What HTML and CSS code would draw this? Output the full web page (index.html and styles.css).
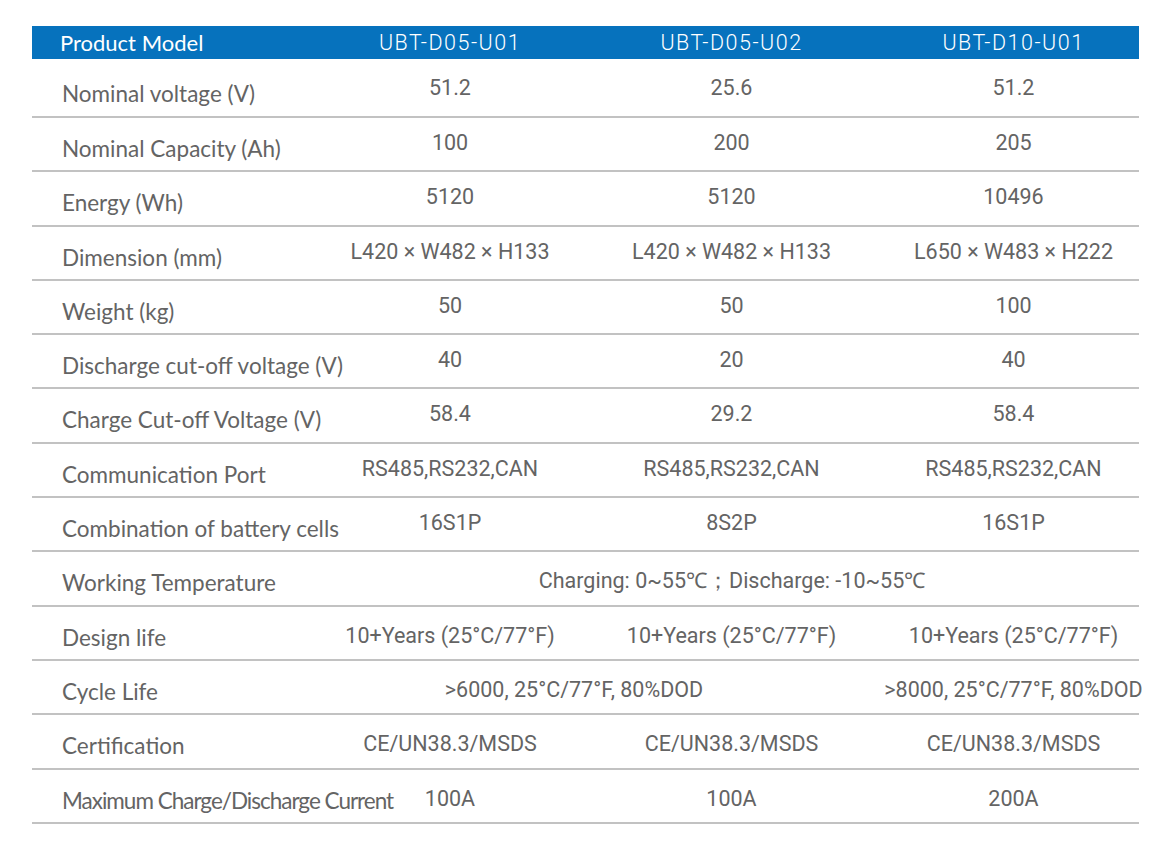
FILE: index.html
```html
<!DOCTYPE html>
<html lang="en">
<head>
<meta charset="utf-8">
<title>Product Specifications</title>
<link rel="stylesheet" href="styles.css">
</head>
<body>
<div class="spec">
  <div class="head">
    <div class="hlabel">Product Model</div>
    <div class="hcell">UBT-D05-U01</div>
    <div class="hcell">UBT-D05-U02</div>
    <div class="hcell">UBT-D10-U01</div>
  </div>
  <div class="row first">
    <div class="label">Nominal voltage (V)</div>
    <div class="val">51.2</div><div class="val">25.6</div><div class="val">51.2</div>
  </div>
  <div class="row">
    <div class="label">Nominal Capacity (Ah)</div>
    <div class="val">100</div><div class="val">200</div><div class="val">205</div>
  </div>
  <div class="row">
    <div class="label">Energy (Wh)</div>
    <div class="val">5120</div><div class="val">5120</div><div class="val">10496</div>
  </div>
  <div class="row">
    <div class="label">Dimension (mm)</div>
    <div class="val">L420 × W482 × H133</div><div class="val">L420 × W482 × H133</div><div class="val">L650 × W483 × H222</div>
  </div>
  <div class="row">
    <div class="label">Weight (kg)</div>
    <div class="val">50</div><div class="val">50</div><div class="val">100</div>
  </div>
  <div class="row">
    <div class="label">Discharge cut-off voltage (V)</div>
    <div class="val">40</div><div class="val">20</div><div class="val">40</div>
  </div>
  <div class="row">
    <div class="label">Charge Cut-off Voltage (V)</div>
    <div class="val">58.4</div><div class="val">29.2</div><div class="val">58.4</div>
  </div>
  <div class="row">
    <div class="label">Communication Port</div>
    <div class="val">RS485,RS232,CAN</div><div class="val">RS485,RS232,CAN</div><div class="val">RS485,RS232,CAN</div>
  </div>
  <div class="row">
    <div class="label">Combination of battery cells</div>
    <div class="val">16S1P</div><div class="val">8S2P</div><div class="val">16S1P</div>
  </div>
  <div class="row late">
    <div class="label">Working Temperature</div>
    <div class="val span3">Charging: 0~55℃；Discharge: -10~55℃</div>
  </div>
  <div class="row late">
    <div class="label">Design life</div>
    <div class="val">10+Years (25°C/77°F)</div><div class="val">10+Years (25°C/77°F)</div><div class="val">10+Years (25°C/77°F)</div>
  </div>
  <div class="row late">
    <div class="label">Cycle Life</div>
    <div class="val span2">&gt;6000, 25°C/77°F, 80%DOD</div><div class="val">&gt;8000, 25°C/77°F, 80%DOD</div>
  </div>
  <div class="row late">
    <div class="label">Certification</div>
    <div class="val">CE/UN38.3/MSDS</div><div class="val">CE/UN38.3/MSDS</div><div class="val">CE/UN38.3/MSDS</div>
  </div>
  <div class="row late">
    <div class="label tight">Maximum Charge/Discharge Current</div>
    <div class="val">100A</div><div class="val">100A</div><div class="val">200A</div>
  </div>
</div>
</body>
</html>
```

FILE: styles.css
```css
html, body {
  margin: 0;
  padding: 0;
  background: #ffffff;
}

body {
  padding: 26px 0 0 32px;
  font-family: "Roboto", "Liberation Sans", sans-serif;
  color: #606060;
}

.spec {
  width: 1107px;
}

.head,
.row {
  display: grid;
  grid-template-columns: 277px 282px 281px 283px;
  width: 1107px;
  box-sizing: border-box;
}

.head {
  height: 33px;
  background: #0672bd;
  color: #ffffff;
  line-height: 33px;
}

.hlabel {
  padding-left: 28px;
  font-family: "Lato", "Open Sans", sans-serif;
  font-weight: 400;
  font-size: 22px;
}

.hcell {
  text-align: center;
  white-space: nowrap;
  font-size: 21.5px;
  font-weight: 300;
  letter-spacing: 1.5px;
}

.row {
  height: 54.3px;
  border-bottom: 2px solid #c2c2c2;
  align-items: start;
}

.row.first {
  height: 59px;
}

.label {
  padding: 19px 0 0 30px;
  font-family: "Lato", "Open Sans", sans-serif;
  font-size: 22.5px;
  line-height: 24px;
  white-space: nowrap;
  color: #646464;
}

.label.tight {
  letter-spacing: -1px;
}

.first .label {
  padding-top: 23px;
}

.val {
  padding-top: 13px;
  font-size: 21.5px;
  line-height: 24px;
  text-align: center;
  white-space: nowrap;
  color: #646464;
}

.first .val {
  padding-top: 17px;
}

.late .val {
  padding-top: 17px;
}

.span3 {
  grid-column: 2 / 5;
  text-align: center;
}

.span2 {
  grid-column: 2 / 4;
  text-align: center;
  padding-right: 33px;
}
```
